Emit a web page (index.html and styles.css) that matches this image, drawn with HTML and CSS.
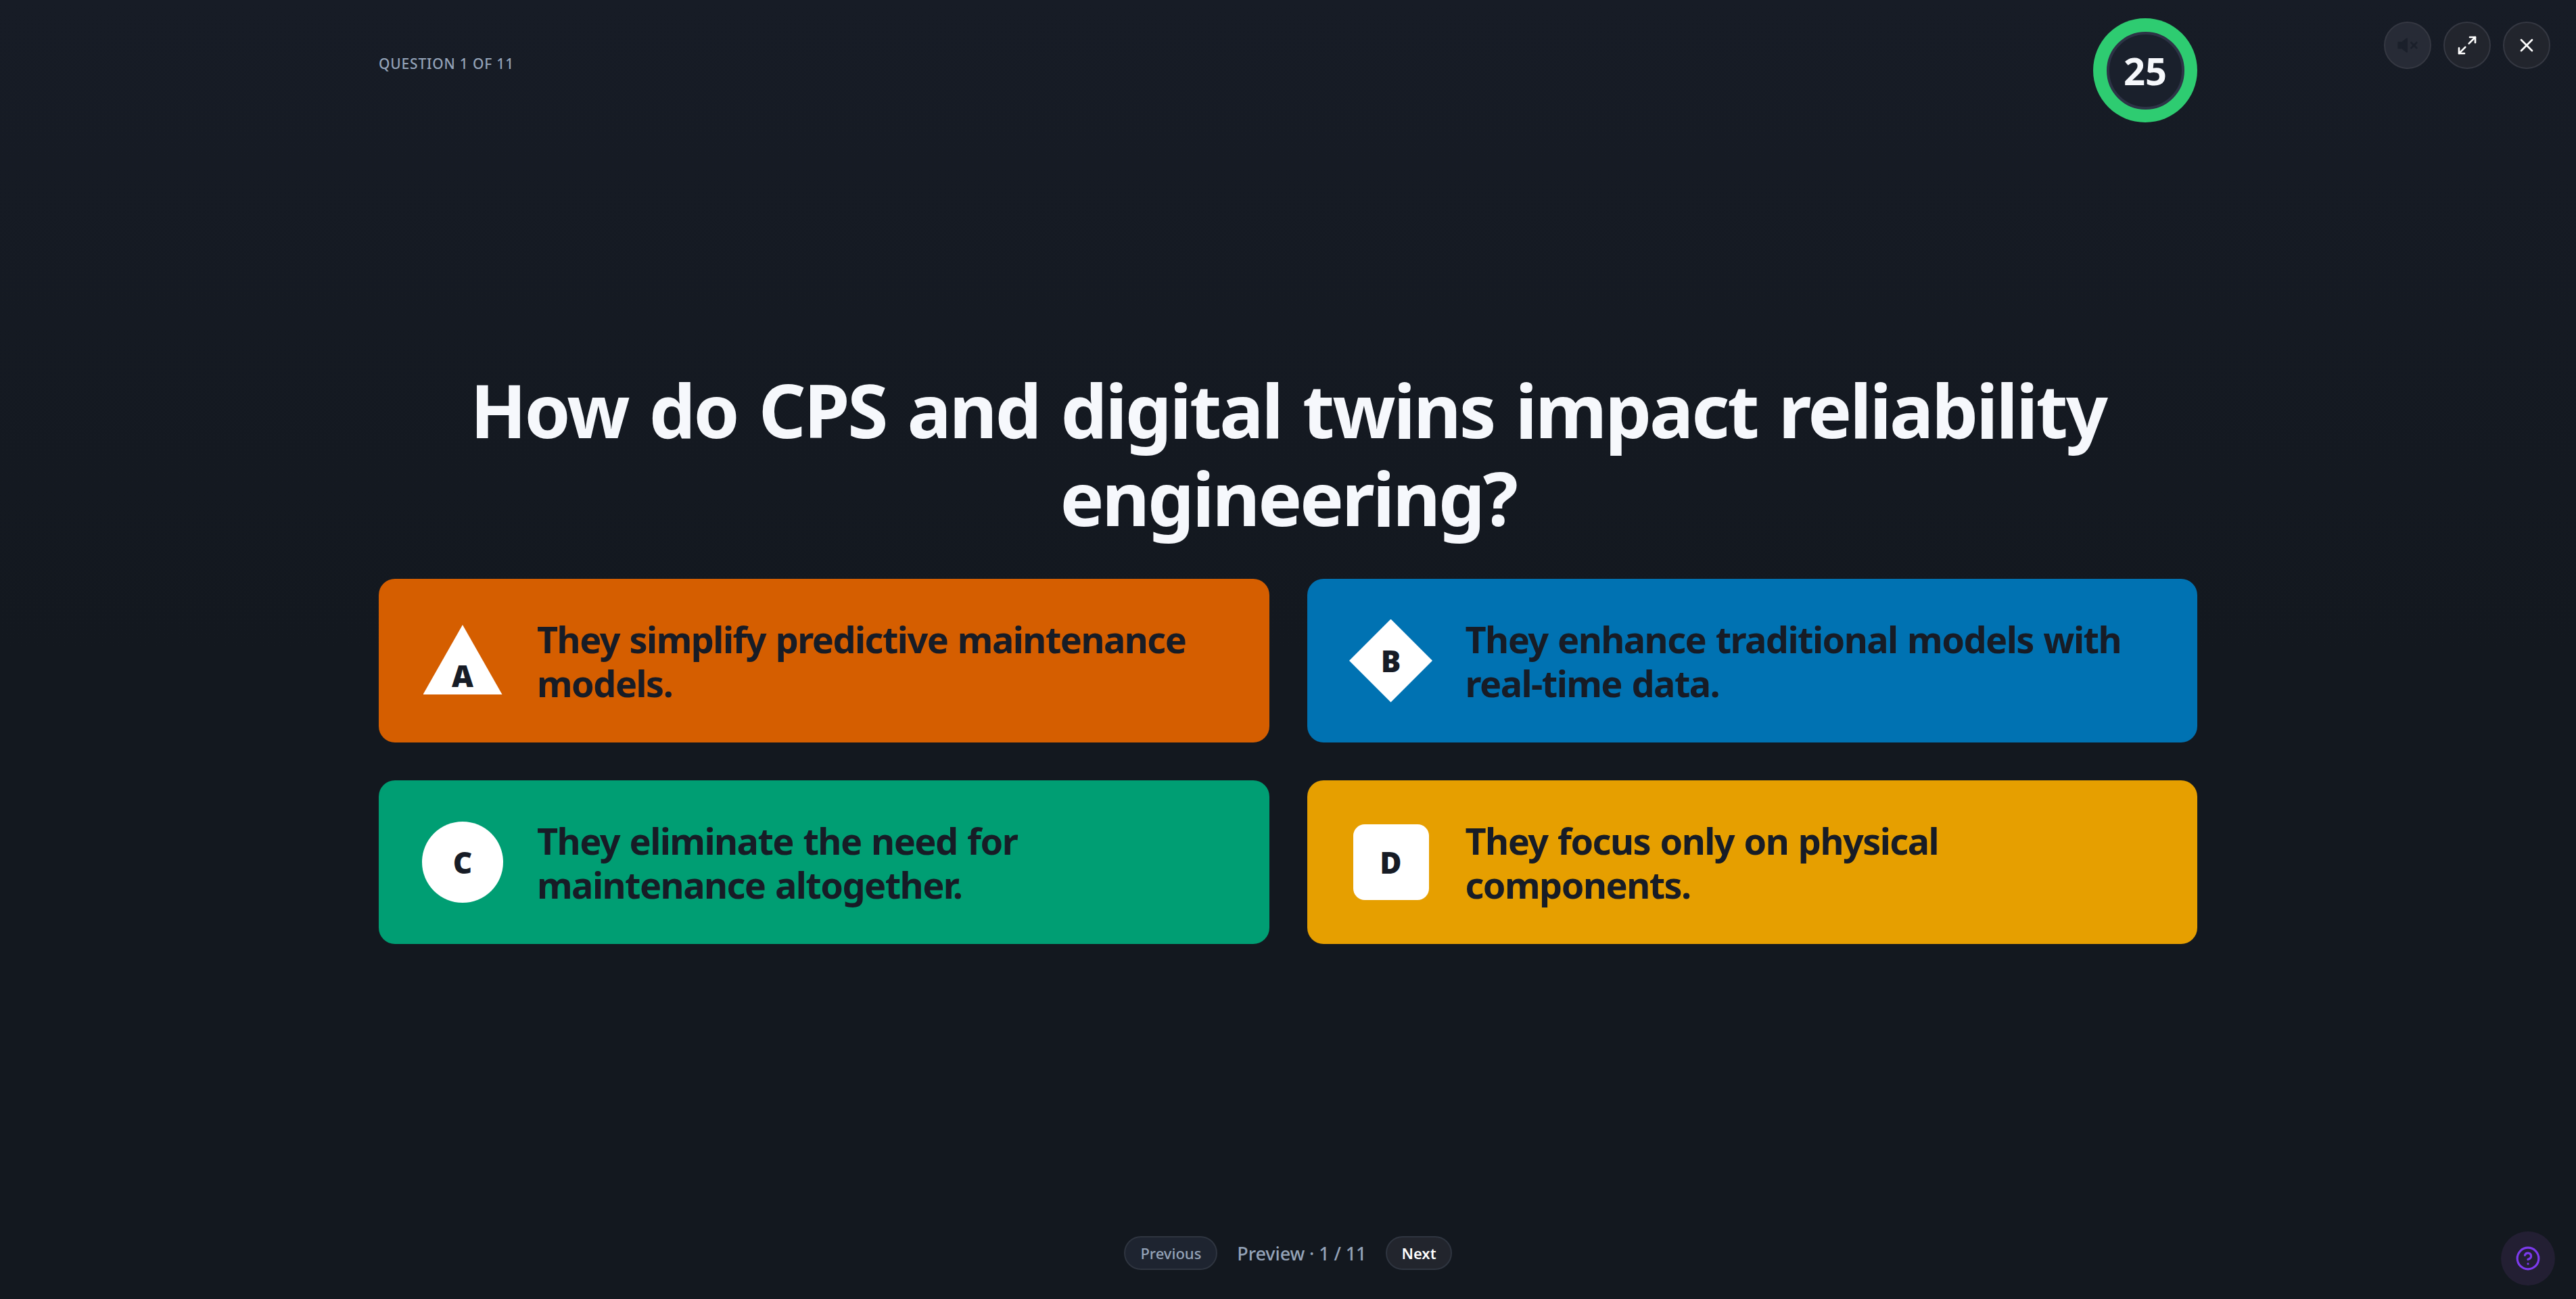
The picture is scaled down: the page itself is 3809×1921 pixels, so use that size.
FILE: index.html
```html
<!DOCTYPE html>
<html>

<head>
	<meta charset="UTF-8">
	<title>Quiz preview</title>
	<link rel="stylesheet" href="styles.css">
</head>

<body>
	<div class="controls">
		<button class="round muted">
			<svg viewBox="0 0 24 24"><polygon points="11 5 6 9 2 9 2 15 6 15 11 19" class="solid"></polygon><line x1="22" y1="9" x2="16" y2="15"></line><line x1="16" y1="9" x2="22" y2="15"></line></svg>
		</button>
		<button class="round">
			<svg viewBox="0 0 24 24"><polyline points="15 3 21 3 21 9"></polyline><line x1="21" y1="3" x2="14" y2="10"></line><polyline points="9 21 3 21 3 15"></polyline><line x1="3" y1="21" x2="10" y2="14"></line></svg>
		</button>
		<button class="round">
			<svg viewBox="0 0 24 24"><line x1="18" y1="6" x2="6" y2="18"></line><line x1="6" y1="6" x2="18" y2="18"></line></svg>
		</button>
	</div>

	<div class="page">
		<header class="top">
			<div class="counter">Question 1 of 11</div>
			<div class="timer">
				<div class="timer-inner">25</div>
			</div>
		</header>

		<main class="quiz">
			<h1>How do CPS and digital twins impact reliability engineering?</h1>
			<div class="answers">
				<div class="answer orange">
					<div class="mark"><span class="shape triangle">A</span></div>
					<div class="answer-text">They simplify predictive maintenance models.</div>
				</div>
				<div class="answer blue">
					<div class="mark"><span class="shape diamond">B</span></div>
					<div class="answer-text">They enhance traditional models with real-time data.</div>
				</div>
				<div class="answer green">
					<div class="mark"><span class="shape circle">C</span></div>
					<div class="answer-text">They eliminate the need for maintenance altogether.</div>
				</div>
				<div class="answer yellow">
					<div class="mark"><span class="shape square">D</span></div>
					<div class="answer-text">They focus only on physical components.</div>
				</div>
			</div>
		</main>

		<footer class="pager">
			<button class="pill">Previous</button>
			<span class="pager-label">Preview · 1 / 11</span>
			<button class="pill next">Next</button>
		</footer>
	</div>

	<button class="help">
		<svg viewBox="0 0 24 24"><circle cx="12" cy="12" r="10"></circle><path d="M9.09 9a3 3 0 0 1 5.83 1c0 2-3 3-3 3"></path><line x1="12" y1="17" x2="12.01" y2="17"></line></svg>
	</button>
</body>

</html>
```

FILE: styles.css
```css
html,
body {
	height: 100%;
	margin: 0;
	padding: 0;
}

body {
	background: linear-gradient(180deg, #171c26 0%, #13181f 50%, #13181f 100%);
	color: #f6f8fc;
	font-family: "Noto Sans", "Open Sans", sans-serif;
	overflow: hidden;
}

button {
	font-family: inherit;
	cursor: pointer;
}

.page {
	height: 100%;
	display: flex;
	flex-direction: column;
	box-sizing: border-box;
}

.top {
	width: 2689px;
	margin: 0 auto;
	padding-top: 27px;
	display: flex;
	justify-content: space-between;
	align-items: flex-start;
}

.counter {
	margin-top: 53px;
	color: #94a3b8;
	font-size: 21px;
	line-height: 28px;
	font-weight: 500;
	letter-spacing: 0.8px;
	text-transform: uppercase;
}

.timer {
	width: 154px;
	height: 154px;
	border-radius: 50%;
	background: #2ecc71;
	display: flex;
	justify-content: center;
	align-items: center;
}

.timer-inner {
	width: 115px;
	height: 115px;
	box-sizing: border-box;
	border: 4px solid #2d3346;
	border-radius: 50%;
	background: #1a202c;
	display: flex;
	justify-content: center;
	align-items: center;
	font-size: 56px;
	font-weight: 700;
}

.quiz {
	flex: 1;
	width: 2689px;
	margin: 0 auto;
	padding-top: 360px;
	box-sizing: border-box;
}

h1 {
	margin: 0 0 55px 0;
	font-size: 109px;
	line-height: 130px;
	font-weight: 700;
	letter-spacing: -3.1px;
	word-spacing: 6px;
	text-align: center;
}

.answers {
	display: grid;
	grid-template-columns: 1fr 1fr;
	gap: 56px;
}

.answer {
	height: 242px;
	padding: 0 64px;
	border-radius: 24px;
	display: flex;
	align-items: center;
	gap: 50px;
	color: #171c26;
}

.orange {
	background: #d55e00;
}

.blue {
	background: #0072b2;
}

.green {
	background: #009e73;
}

.yellow {
	background: #e69f00;
}

.answer-text {
	padding-top: 2px;
	font-size: 54px;
	line-height: 65px;
	font-weight: 700;
	letter-spacing: -1.55px;
	word-spacing: 2px;
}

.mark {
	flex: none;
	width: 120px;
	height: 120px;
	display: flex;
	justify-content: center;
	align-items: center;
}

.shape {
	background: #fff;
	color: #171c26;
	display: flex;
	justify-content: center;
	align-items: center;
	font-size: 44px;
	font-weight: 900;
	line-height: 1;
}

.triangle {
	width: 117px;
	height: 103px;
	margin-bottom: 3px;
	align-items: flex-end;
	padding-bottom: 6px;
	box-sizing: border-box;
	clip-path: polygon(50% 0, 100% 100%, 0 100%);
}

.diamond {
	flex: none;
	width: 123px;
	height: 123px;
	clip-path: polygon(50% 0, 100% 50%, 50% 100%, 0 50%);
}

.circle {
	width: 120px;
	height: 120px;
	border-radius: 50%;
}

.square {
	width: 112px;
	height: 112px;
	border-radius: 17px;
}

.pager {
	display: flex;
	justify-content: center;
	align-items: center;
	gap: 29px;
	padding-bottom: 43px;
}

.pill {
	height: 50px;
	padding: 0 22px;
	border: 2px solid #2f3540;
	border-radius: 25px;
	background: #1e2430;
	color: #94a3b8;
	font-size: 22px;
	font-weight: 500;
}

.pill.next {
	padding: 0 21px;
	background: #22252d;
	color: #fff;
	font-weight: 600;
}

.pager-label {
	color: #94a3b8;
	font-size: 27px;
	font-weight: 500;
	letter-spacing: -0.1px;
}

.controls {
	position: absolute;
	top: 32px;
	right: 38px;
	display: flex;
	gap: 18px;
}

.round {
	width: 70px;
	height: 70px;
	padding: 0;
	border: 2px solid #353842;
	border-radius: 50%;
	background: #22252d;
	color: #fff;
	display: flex;
	justify-content: center;
	align-items: center;
}

.round svg {
	width: 32px;
	height: 32px;
	fill: none;
	stroke: currentColor;
	stroke-width: 2;
	stroke-linecap: round;
	stroke-linejoin: round;
}

.round.muted {
	background: #272b36;
	color: #1b202b;
}

.round .solid {
	fill: currentColor;
}

.help {
	position: absolute;
	right: 31px;
	bottom: 20px;
	width: 80px;
	height: 80px;
	padding: 0;
	border: none;
	border-radius: 50%;
	background: #231f33;
	color: #7c3aed;
	display: flex;
	justify-content: center;
	align-items: center;
}

.help svg {
	width: 38px;
	height: 38px;
	fill: none;
	stroke: currentColor;
	stroke-width: 2;
	stroke-linecap: round;
	stroke-linejoin: round;
}
```
